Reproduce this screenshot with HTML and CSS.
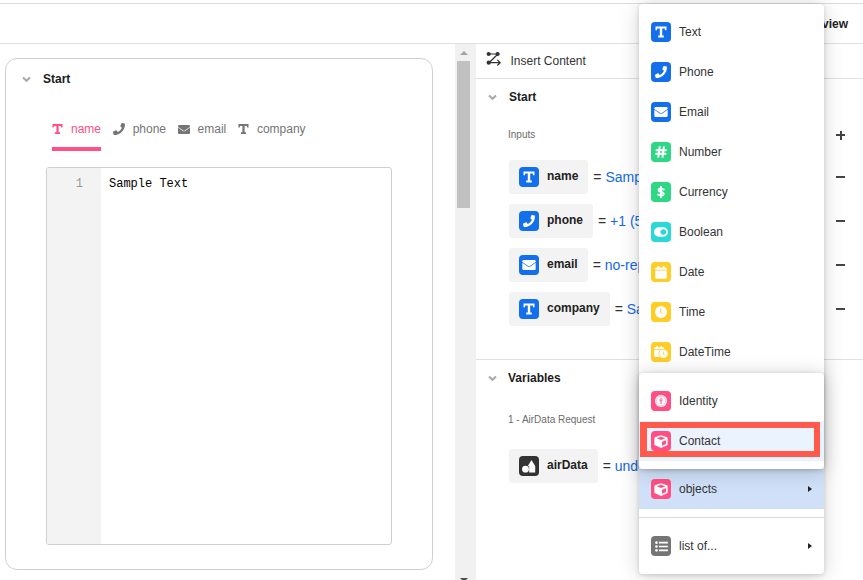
FILE: index.html
```html
<!DOCTYPE html>
<html lang="en">
<head>
<meta charset="utf-8">
<title>Insert Content</title>
<link rel="stylesheet" href="styles.css">
</head>
<body>
<svg class="defs" aria-hidden="true">
  <symbol id="text" viewBox="0 0 12 12"><path d="M.5.600h11v3.700H10.100l-.400-1.700H7.200v6.900H8.800v1.900H3.200V9.500H4.800V2.600H2.300L1.900 4.300H.5z"/></symbol>
  <symbol id="phone" viewBox="0 0 512 512"><path d="M493.400 24.600l-104-24c-11.300-2.600-22.900 3.300-27.500 13.900l-48 112c-4.200 9.800-1.400 21.300 6.900 28l60.600 49.600c-36 76.700-98.900 140.500-177.200 177.200l-49.600-60.600c-6.800-8.300-18.200-11.100-28-6.900l-112 48C3.900 366.500-2 378.100.6 389.400l24 104C27.100 504.200 36.700 512 48 512c256.100 0 464-207.500 464-464 0-11.200-7.700-20.900-18.600-23.400z"/></symbol>
  <symbol id="mail" viewBox="0 0 512 384"><path d="M48 0h416q48 0 48 48v28L290 230q-34 22-68 0L0 76V48Q0 0 48 0zM0 108l204 144q52 34 104 0l204-144v228q0 48-48 48H48q-48 0-48-48z"/></symbol>
  <symbol id="hash" viewBox="0 0 12 12"><path d="M4.700 1 3.300 11M8.900 1 7.500 11M1.500 4.200h9.500M1 7.800h9.500" fill="none" stroke="currentColor" stroke-width="2" stroke-linecap="round"/></symbol>
  <symbol id="dollar" viewBox="0 0 12 12"><path d="M6 .5v11M8.700 3.500C5.600 2.200 3.500 2.400 3.500 4.100c0 2.300 5.200 1.500 5.200 3.900 0 1.900-2.900 1.900-5.500.6" fill="none" stroke="currentColor" stroke-width="1.900" stroke-linecap="round"/></symbol>
  <symbol id="toggle" viewBox="0 0 14 10"><path fill-rule="evenodd" d="M4.700.300h4.600a4.700 4.700 0 0 1 0 9.400H4.700a4.700 4.700 0 0 1 0-9.400zM9.300 2.200a2.800 2.800 0 1 0 0 5.600 2.800 2.800 0 0 0 0-5.600z"/></symbol>
  <symbol id="date" viewBox="0 0 12 13"><path d="M2.500 0h1.700v1.500h3.600V0h1.700v1.500h1q1.300 0 1.300 1.300v1H.2v-1q0-1.300 1.300-1.300h1zM.2 4.500h11.600v7q0 1.300-1.300 1.300h-9Q.2 12.800.2 11.500z"/></symbol>
  <symbol id="time" viewBox="0 0 12 12"><circle cx="6" cy="6" r="6"/><path d="M5.700 2.500v3.800l1.600 1.400" fill="none" stroke="#ffcd24" stroke-width="1"/></symbol>
  <symbol id="datetime" viewBox="0 0 14 12"><path d="M2.300 0h1.500v1.200h2.800V0h1.500v1.200h1q1 0 1 1v.9H.2v-.9q0-1 1-1h1.100zM.2 3.800h8L5.500 7l.8 4H1.200q-1 0-1-1z"/><circle cx="9.500" cy="7.700" r="4.600" stroke="#ffcd24" stroke-width=".8"/><path d="M9.300 5.500v2.500l1.300.7" fill="none" stroke="#ffcd24" stroke-width=".9"/></symbol>
  <symbol id="identity" viewBox="0 0 12 12"><circle cx="6" cy="6" r="6"/><circle cx="6" cy="6" r="4.700" fill="none" stroke="#ff4f84" stroke-width=".35"/><circle cx="6" cy="3.300" r=".7" fill="#ff4f84"/><path d="M4.200 5h3.600M6 5v4" stroke="#ff4f84" stroke-width="1"/></symbol>
  <symbol id="cube" viewBox="0 0 14 13"><path d="M7 .2 13 2.300q.6.200.6.900v6.200q0 .6-.6.900L7 12.900 1 10.300q-.6-.3-.6-.9V3.200q0-.7.6-.9z"/><path d="M7 1.800 11.300 3.300 7 4.900 2.700 3.300zM8 6.700l4-1.500v3.700L8 10.700z" fill="#ff4f84"/></symbol>
  <symbol id="list" viewBox="0 0 14 12"><path d="M4.200 1.800H14M4.200 6H14M4.200 10.200H14" stroke="currentColor" stroke-width="1.900"/><circle cx="1.500" cy="1.800" r="1.400"/><circle cx="1.500" cy="6" r="1.400"/><circle cx="1.500" cy="10.200" r="1.400"/></symbol>
  <symbol id="shapes" viewBox="0 0 14 13"><path d="M9.500 0 13.300 6.300H5.700zM7.200 6.300h6v6.300h-6z"/><circle cx="3.500" cy="9.200" r="3.400"/></symbol>
  <symbol id="chevron" viewBox="0 0 8 6"><path d="M.9 1.200 4 4.200l3.100-3" fill="none" stroke="currentColor" stroke-width="1.900"/></symbol>
</svg>

<header class="topbar"><span>Preview</span></header>

<main class="workspace">
  <section class="editor-pane">
    <div class="card">
      <h2 class="heading"><svg class="chevron"><use href="#chevron"/></svg>Start</h2>
      <nav class="tabs">
        <a class="tab active"><svg class="tab-text"><use href="#text"/></svg>name</a>
        <a class="tab"><svg class="tab-phone"><use href="#phone"/></svg>phone</a>
        <a class="tab"><svg class="tab-mail"><use href="#mail"/></svg>email</a>
        <a class="tab"><svg class="tab-text"><use href="#text"/></svg>company</a>
      </nav>
      <div class="code"><div class="gutter">1</div><div class="source">Sample Text</div></div>
    </div>
  </section>

  <div class="scrollbar"><i class="up"></i><i class="thumb"></i><i class="down"></i></div>

  <aside class="panel">
    <div class="panel-title">
      <svg viewBox="0 0 16 16"><path d="M3 3h9L3 11.700h11M11.300 8.900l2.900 2.800-2.900 2.800" fill="none" stroke="#333" stroke-width="1.200"/><circle cx="2.700" cy="3" r="2.100"/><circle cx="11.600" cy="3" r="2.100"/><circle cx="2.700" cy="11.700" r="2.100"/></svg>
      Insert Content
    </div>
    <section class="group inputs">
      <h2 class="heading"><svg class="chevron"><use href="#chevron"/></svg>Start</h2>
      <div class="caption">Inputs<i class="plus"></i></div>
      <div class="row"><span class="chip"><b class="icon blue"><svg><use href="#text"/></svg></b><span>name</span></span><span class="value">= <em>Sample Text</em></span><i class="minus"></i></div>
      <div class="row"><span class="chip"><b class="icon blue"><svg><use href="#phone"/></svg></b><span>phone</span></span><span class="value">= <em>+1 (555)</em></span><i class="minus"></i></div>
      <div class="row"><span class="chip"><b class="icon blue"><svg class="wide mail"><use href="#mail"/></svg></b><span>email</span></span><span class="value">= <em>no-reply</em></span><i class="minus"></i></div>
      <div class="row"><span class="chip"><b class="icon blue"><svg><use href="#text"/></svg></b><span>company</span></span><span class="value">= <em>Sample</em></span><i class="minus"></i></div>
    </section>
    <section class="group variables">
      <h2 class="heading"><svg class="chevron"><use href="#chevron"/></svg>Variables</h2>
      <div class="caption">1 - AirData Request</div>
      <div class="row"><span class="chip"><b class="icon dark"><svg class="wide tall"><use href="#shapes"/></svg></b><span>airData</span></span><span class="value">= <em>undefined</em></span></div>
    </section>
  </aside>
</main>

<div class="menu">
  <div class="item"><b class="icon blue"><svg><use href="#text"/></svg></b>Text</div>
  <div class="item"><b class="icon blue"><svg><use href="#phone"/></svg></b>Phone</div>
  <div class="item"><b class="icon blue"><svg class="wide mail"><use href="#mail"/></svg></b>Email</div>
  <div class="item"><b class="icon green"><svg><use href="#hash"/></svg></b>Number</div>
  <div class="item"><b class="icon green"><svg><use href="#dollar"/></svg></b>Currency</div>
  <div class="item"><b class="icon teal"><svg class="wide"><use href="#toggle"/></svg></b>Boolean</div>
  <div class="item"><b class="icon yellow"><svg class="tall"><use href="#date"/></svg></b>Date</div>
  <div class="item"><b class="icon yellow"><svg><use href="#time"/></svg></b>Time</div>
  <div class="item"><b class="icon yellow"><svg class="wide"><use href="#datetime"/></svg></b>DateTime</div>
  <div class="item open"><b class="icon pink"><svg class="wide tall"><use href="#cube"/></svg></b>objects<i class="arrow"></i></div>
  <hr>
  <div class="item"><b class="icon gray"><svg class="list"><use href="#list"/></svg></b>list of...<i class="arrow"></i></div>
  <div class="submenu">
    <div class="item"><b class="icon pink"><svg><use href="#identity"/></svg></b>Identity</div>
    <div class="item hover"><b class="icon pink"><svg class="wide tall"><use href="#cube"/></svg></b>Contact</div>
    <div class="highlight"></div>
  </div>
</div>
</body>
</html>
```
FILE: styles.css
```css
* { box-sizing: border-box; }

body {
  margin: 0;
  height: 580px;
  overflow: hidden;
  background: #fff;
  color: #333;
  font: 12px/16px "Liberation Sans", Arial, sans-serif;
}

svg { display: block; flex: none; fill: currentColor; }
.defs { position: absolute; width: 0; height: 0; }

.topbar {
  display: flex;
  justify-content: flex-end;
  align-items: center;
  height: 41px;
  margin-top: 3px;
  padding-right: 15px;
  border-top: 1px solid #ddd;
  border-bottom: 1px solid #e2e2e2;
  font-weight: bold;
  color: #222;
}

.workspace { display: flex; height: 536px; }
.editor-pane { width: 455px; padding: 14px 22px 10px 5px; }

.card {
  height: 512px;
  padding: 12px 40px 24px;
  border: 1px solid #d0d0d0;
  border-radius: 12px;
}

.heading {
  display: flex;
  align-items: center;
  gap: 12px;
  height: 16px;
  margin: 0;
  font-size: 12px;
  color: #1c1c1c;
}
.card .heading { margin-left: -24px; }
.chevron { width: 9px; height: 7px; color: #aaa; }
.variables .heading { gap: 11px; }

.tabs { display: flex; gap: 11.600px; height: 50px; margin: 30px 0 0 6px; }
.tab {
  display: flex;
  align-items: center;
  gap: 8px;
  height: 34px;
  padding-bottom: 10px;
  color: #757575;
}
.active { color: #ff4f84; border-bottom: 4px solid #ff4f84; padding-bottom: 6px; }
.tab-text { width: 11px; height: 12px; }
.tab-phone { width: 12px; height: 12px; }
.tab-mail { width: 12px; height: 9px; }

.code {
  display: flex;
  width: 346px;
  height: 378px;
  border: 1px solid #cfcfcf;
  border-radius: 3px;
  overflow: hidden;
  font-family: "Liberation Mono", monospace;
  color: #000;
}
.gutter { width: 54px; padding: 8px 18px 0 0; background: #f3f3f3; text-align: right; color: #999; }
.source { padding: 8px 8px 0; }

.scrollbar {
  display: flex;
  flex-direction: column;
  width: 21px;
  padding: 7px 0 0 2px;
  background: #f1f1f1;
}
.scrollbar i { flex: none; }
.up { width: 0; margin: 0 0 6px 3px; border: 4px solid transparent; border-top: 0; border-bottom-color: #a3a3a3; }
.thumb { width: 13px; height: 147px; background: #c1c1c1; }
.down { width: 0; margin: auto 0 -2px 3px; border: 4px solid transparent; border-bottom: 0; border-top-color: #505050; }

.panel { flex: 1; min-width: 0; }
.panel-title {
  display: flex;
  align-items: center;
  gap: 8.500px;
  height: 35px;
  padding-left: 10px;
  border-bottom: 1px solid #e0e0e0;
}
.panel-title svg { width: 16px; height: 16px; margin-top: -5px; }

.group { padding: 10px 18px 0 12px; }
.inputs { height: 281px; border-bottom: 1px solid #e0e0e0; }
.group .caption {
  display: flex;
  justify-content: space-between;
  align-items: center;
  height: 16px;
  margin: 22px 0 17px 20px;
  font-size: 10px;
  color: #6c6c6c;
}
.variables .caption { margin: 26px 0 21px 20px; }

.plus, .minus { width: 9px; height: 2px; background: #444; }
.plus { position: relative; }
.plus::after { content: ""; position: absolute; left: 3.500px; top: -3.500px; width: 2px; height: 9px; background: #444; }
.minus { margin-left: auto; }

.row { display: flex; align-items: center; height: 34px; margin: 0 0 10px 21px; }
.chip {
  display: flex;
  align-items: center;
  gap: 8px;
  height: 34px;
  padding: 0 10px;
  border-radius: 3px;
  background: #f3f3f3;
  color: #222;
  font-weight: bold;
}
.chip span { margin-top: -2px; }
.value { margin-left: 5px; font-size: 14px; white-space: nowrap; }
.value em { font-style: normal; color: #1669e5; }

.icon {
  display: flex;
  flex: none;
  align-items: center;
  justify-content: center;
  width: 20px;
  height: 20px;
  border-radius: 4px;
  color: #fff;
}
.icon svg { width: 12px; height: 12px; }
.icon .wide { width: 14px; }
.icon .mail { height: 10px; }
.icon .tall { height: 13px; }
.icon .list { width: 13px; height: 11px; }
.blue { background: #136fec; }
.green { background: #2dd784; }
.teal { background: #2ad8d5; }
.yellow { background: #ffcd24; }
.pink { background: #ff4f84; }
.gray { background: #757575; }
.dark { background: #333; }

.menu {
  position: absolute;
  left: 639px;
  top: 4px;
  width: 185px;
  height: 570px;
  padding: 8px 0;
  border-radius: 4px;
  background: #fff;
  box-shadow: 0 2px 20px rgba(0, 0, 0, .18), 0 1px 4px rgba(0, 0, 0, .14);
}
.item { display: flex; align-items: center; gap: 8px; height: 40px; padding: 0 12px; }
.open { margin-top: 97px; background: #cfe0f8; }
.menu hr { margin: 8px 0; border: 0; border-top: 1px solid #ddd; }
.arrow { width: 0; margin-left: auto; border: 3.500px solid transparent; border-right: 0; border-left: 4px solid #222; }

.submenu {
  position: absolute;
  left: 0;
  top: 369px;
  width: 185px;
  height: 96px;
  padding: 8px 0;
  border-radius: 4px;
  background: #fff;
  box-shadow: 0 2px 20px rgba(0, 0, 0, .2), 0 1px 4px rgba(0, 0, 0, .2);
}
.hover { background: #ebf3ff; }
.highlight { position: absolute; left: 1px; top: 49px; width: 180px; height: 35px; border: 6px solid #ff5a4c; border-left-width: 7px; }
```
